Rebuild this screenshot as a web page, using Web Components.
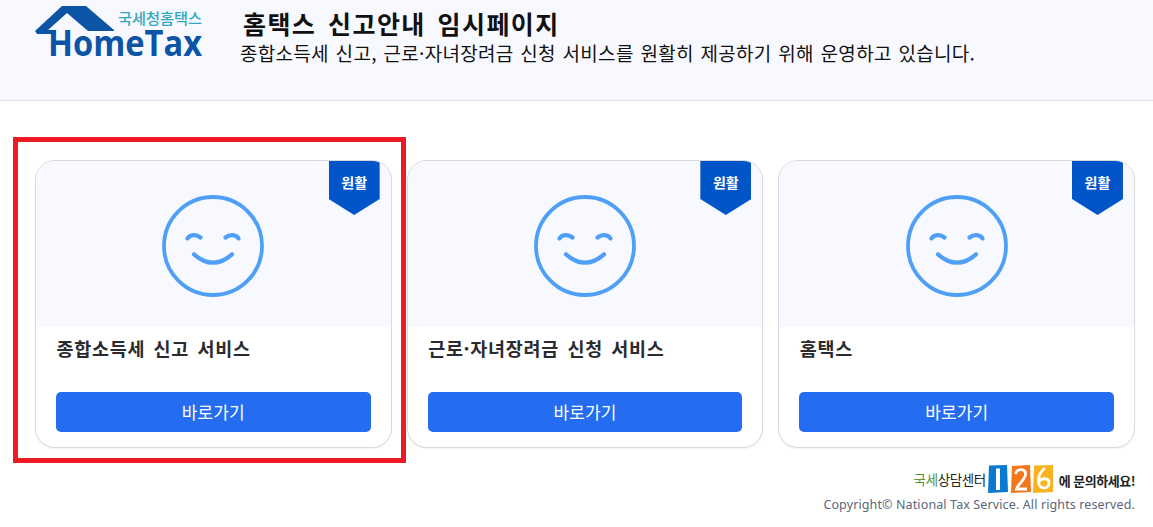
<!DOCTYPE html>
<html lang="ko"><head><meta charset="utf-8"><title>홈택스 신고안내 임시페이지</title>
<style>
html,body{margin:0;padding:0;background:#fff}
body{font-family:"Noto Sans CJK KR","Noto Sans",sans-serif;width:1153px;height:527px;overflow:hidden;position:relative}
</style></head><body>
<ht-header></ht-header>
<ht-cards>
  <ht-card label="종합소득세 신고 서비스" status="원활"></ht-card>
  <ht-card label="근로·자녀장려금 신청 서비스" status="원활"></ht-card>
  <ht-card label="홈택스" status="원활"></ht-card>
</ht-cards>
<ht-footer></ht-footer>
<ht-highlight></ht-highlight>
<script>
const F='"Noto Sans CJK KR","Noto Sans",sans-serif';
class HtLogo extends HTMLElement{connectedCallback(){this.attachShadow({mode:'open'}).innerHTML=`<style>:host{display:block;width:168px;height:60px}svg{display:block;overflow:visible}</style>
<svg width="168" height="60" viewBox="35 2 168 60">
<path d="M35 30 L62 5 H86 L114 29 V30 H88 L67 12 L48 29 H56 V33 H37 Z" fill="#0c54a6"/>
<text x="118" y="23" font-family='${F}' font-size="15" font-weight="500" fill="#2fa9c0" textLength="84" lengthAdjust="spacingAndGlyphs">국세청홈택스</text>
<text x="48" y="55" font-family='"Open Sans",sans-serif' font-size="35" font-weight="700" fill="#0c54a6" textLength="154" lengthAdjust="spacingAndGlyphs">HomeTax</text>
</svg>`}}
class HtHeader extends HTMLElement{connectedCallback(){this.attachShadow({mode:'open'}).innerHTML=`<style>
:host{display:flex;box-sizing:border-box;height:101px;background:#f8f9ff;border-bottom:1px solid #e2e4ea;padding:3px 0 0 35px;gap:39px;color:#111}
.t{display:flex;flex-direction:column;padding-top:3px}
h1{margin:0;font-size:25px;line-height:34px;font-weight:700;letter-spacing:1.4px;word-spacing:3.5px;padding-left:1px}
p{margin:0;font-size:19px;line-height:27px;letter-spacing:.3px;word-spacing:1.1px;margin-left:-2px;margin-top:-1px}
</style><ht-logo></ht-logo><div class="t"><h1>홈택스 신고안내 임시페이지</h1><p>종합소득세 신고, 근로·자녀장려금 신청 서비스를 원활히 제공하기 위해 운영하고 있습니다.</p></div>`}}
class HtCards extends HTMLElement{connectedCallback(){this.attachShadow({mode:'open'}).innerHTML=`<style>
:host{display:grid;grid-template-columns:repeat(3,1fr);gap:15px;padding:59px 18px 0 35px;height:288px}
</style><slot></slot>`}}
class HtCard extends HTMLElement{connectedCallback(){this.attachShadow({mode:'open'}).innerHTML=`<style>
:host{display:flex;flex-direction:column;box-sizing:border-box;height:288px;border:1px solid #d8d9de;border-radius:20px;overflow:hidden;position:relative;background:#fff;box-shadow:0 1px 2px rgba(0,0,0,.06)}
.top{height:166px;background:#f8f9fe;display:flex;align-items:center;justify-content:center;flex:none}
.badge{position:absolute;top:0;right:11px;width:51px;height:54px;background:#0056c8;clip-path:polygon(0 0,100% 0,100% 38px,50% 100%,0 38px);color:#fff;font-size:14px;font-weight:700;text-align:center;line-height:43px}
.bot{flex:1;display:flex;flex-direction:column;justify-content:space-between;padding:8px 20px 15px 20.500px}
.bot button{margin-left:-.5px}
h2{margin:0;font-size:18.5px;line-height:26px;font-weight:700;color:#2b2b2f;letter-spacing:.7px;word-spacing:2.6px}
button{all:unset;display:block;box-sizing:border-box;height:40px;background:#256df0;border-radius:5px;color:#fff;text-align:center;font:400 17px/38px ${F};letter-spacing:.1px}
svg{display:block;margin-top:4px}
</style><div class="top"><svg width="106" height="106" viewBox="0 0 106 106" fill="none" stroke="#4f9ff6" stroke-width="3.800" stroke-linecap="round"><circle cx="53" cy="53" r="49"/><path stroke-width="4.200" d="M27.500 45.500 C30 41.500 36 41 40.500 44.500M65.500 44.500 C70 41 76 41.500 78.500 45.500M34 61.300 Q53 78 72 61.300"/></svg></div>
<div class="badge">${this.getAttribute('status')}</div>
<div class="bot"><h2>${this.getAttribute('label')}</h2><button>바로가기</button></div>`}}
class HtFooter extends HTMLElement{connectedCallback(){this.attachShadow({mode:'open'}).innerHTML=`<style>
:host{display:flex;flex-direction:column;align-items:flex-end;padding:17px 18px 0 0}
.r{display:flex;align-items:center;height:28px}
.c{font-size:13.500px;font-weight:400;letter-spacing:-.4px;color:#222;margin-right:2px}
.c b{font-weight:400;color:#5d9438}
.q{font-size:13px;font-weight:700;color:#222;letter-spacing:-.5px;margin-left:5px;padding-top:2px}
svg{display:block}
.cp{font:400 12.5px/16px "Noto Sans",sans-serif;color:#5b6678;letter-spacing:.12px;margin-top:4px}
</style><div class="r"><span class="c"><b>국세</b>상담센터</span>
<svg width="66" height="28" viewBox="0 0 66 28"><path d="M1 0.500 L19 0 L20 27 L0 28 Z" fill="#0a79cf"/><path d="M8 3.500 H12 V25 H8 Z" fill="#fff"/><path d="M24 1 L42 0 L43 27 L23 28 Z" fill="#f5761a"/><path d="M27.500 9 C29 3 38 3 37.500 9.500 C37 15 30 19 28.500 24 H39" fill="none" stroke="#fff" stroke-width="2.800"/><path d="M46 0.500 L65 0 L65 27 L45 28 Z" fill="#fbb21f"/><path d="M57 3 C52 7 50 12 50.500 17 C51 25 61 24.500 61 18 C61 12.500 53 12.500 51 17" fill="none" stroke="#fff" stroke-width="2.800"/></svg>
<span class="q">에 문의하세요!</span></div><div class="cp">Copyright© National Tax Service. All rights reserved.</div>`}}
class HtHighlight extends HTMLElement{connectedCallback(){this.attachShadow({mode:'open'}).innerHTML=`<style>
:host{display:block;position:absolute;left:13px;top:137px;width:393px;height:326px;box-sizing:border-box;border:5px solid #ed1c24;pointer-events:none}
</style>`}}
customElements.define('ht-logo',HtLogo);customElements.define('ht-header',HtHeader);customElements.define('ht-cards',HtCards);customElements.define('ht-card',HtCard);customElements.define('ht-footer',HtFooter);customElements.define('ht-highlight',HtHighlight);
</script></body></html>
